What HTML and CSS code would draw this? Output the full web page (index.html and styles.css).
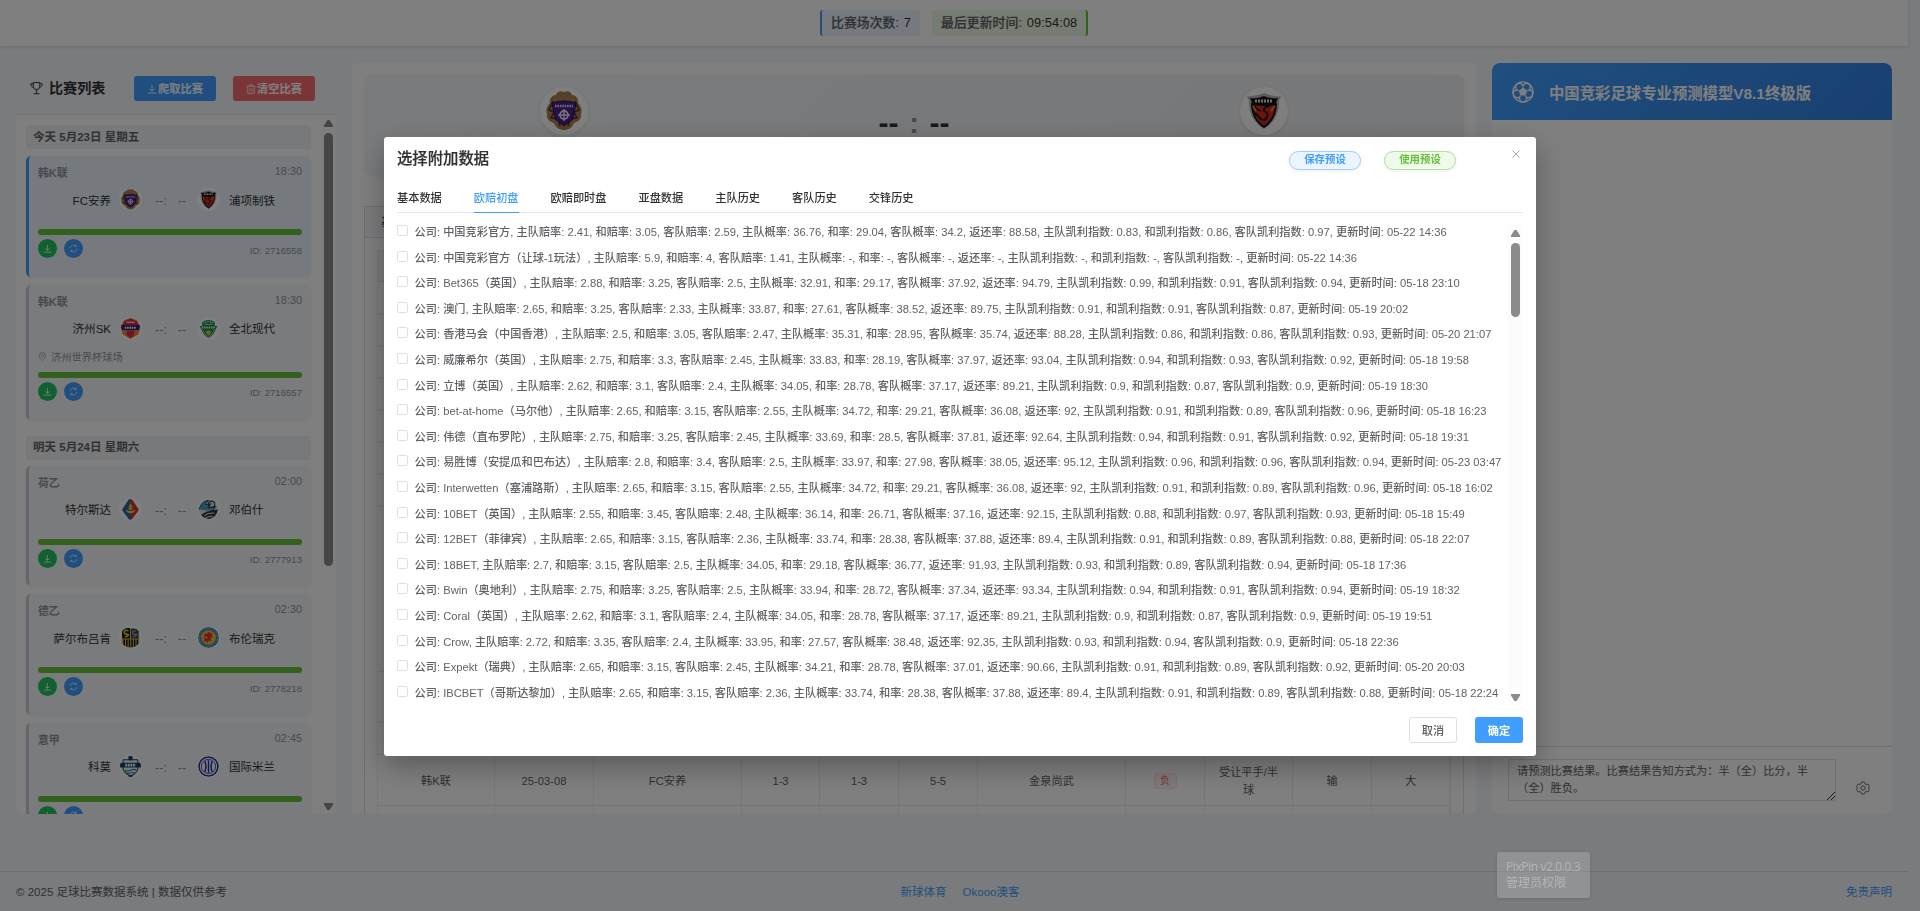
FILE: index.html
```html
<!DOCTYPE html>
<html lang="zh-CN">
<head>
<meta charset="utf-8">
<title>足球比赛数据系统</title>
<link rel="stylesheet" href="styles.css">
</head>
<body>
<svg class="defs" width="0" height="0">
  <symbol id="i-down" viewBox="0 0 20 20"><path d="M10 2v12M5 9.500l5 5 5-5M1.500 18h17" fill="none" stroke="currentColor" stroke-width="1.800"/></symbol>
  <symbol id="i-refresh" viewBox="0 0 20 20"><path d="M17.500 11A7.600 7.600 0 0 1 4.500 15.300M2.500 9A7.600 7.600 0 0 1 15.500 4.700M16 1.500v4h-4M4 18.500v-4h4" fill="none" stroke="currentColor" stroke-width="1.500"/></symbol>
  <symbol id="i-trash" viewBox="0 0 20 20"><path d="M1 4.500h18M7 4.500V1.500h6v3M3.500 4.500v14h13v-14M8 8.500v6M12 8.500v6" fill="none" stroke="currentColor" stroke-width="1.600"/></symbol>
  <symbol id="i-cup" viewBox="0 0 20 20"><path d="M5 1.500h10v6a5 5 0 0 1-10 0zM5 3.500H1.200c0 3 1 5 4 5.500M15 3.500h3.800c0 3-1 5-4 5.500M10 12.500v6M5.500 18.800h9" fill="none" stroke="currentColor" stroke-width="1.500"/></symbol>
  <symbol id="i-pin" viewBox="0 0 20 20"><path d="M10 19C5.500 15 3 11.500 3 8a7 7 0 0 1 14 0c0 3.500-2.500 7-7 11z" fill="none" stroke="currentColor" stroke-width="1.500"/><circle cx="10" cy="8" r="2.800" fill="none" stroke="currentColor" stroke-width="1.500"/></symbol>
  <symbol id="i-gear" viewBox="0 0 20 20"><path d="M7.800 1.500h4.400l.7 2.500 1.700 1 2.500-.7 2.200 3.800-1.800 1.900 1.800 1.900-2.200 3.800-2.500-.7-1.700 1-.7 2.500H7.800L7.100 16l-1.700-1-2.500.7-2.200-3.800L2.500 10 .7 8.100l2.200-3.800 2.500.7 1.700-1z" fill="none" stroke="currentColor" stroke-width="1.300"/><circle cx="10" cy="10" r="3" fill="none" stroke="currentColor" stroke-width="1.300"/></symbol>
  <symbol id="c-anyang" viewBox="0 0 40 40"><path d="M20 1c4-2 7 0 8 3 4 0 7 4 6 8 4 4 4 8 3 11 1 5-3 8-7 9-2 5-6 7-10 7s-8-2-10-7c-4-1-8-4-7-9-1-3-1-7 3-11-1-4 2-8 6-8 1-3 4-5 8-3z" fill="#a9824e"/><path d="M9 10l-4 9 5 2-3 6 7 1 2 7M31 10l4 9-5 2 3 6-7 1-2 7" stroke="#4b3020" fill="none" stroke-width="1.400"/><path d="M8 12q12-4 24 0l-3 16-9 7-9-7z" fill="#4b1f8c" stroke="#2a1250"/><path d="M11 15h18" stroke="#d9cfee" stroke-width="2.400" stroke-dasharray="1.600 .8"/><circle cx="20" cy="24" r="4" fill="none" stroke="#e9e3f5" stroke-width="1.800"/><path d="M20 18v12M14 24h12" stroke="#e9e3f5" stroke-width="1.400"/></symbol>
  <symbol id="c-pohang" viewBox="0 0 40 40"><path d="M3 5q8 1 17-3 9 4 17 3l-2 5q1 18-15 28Q4 28 5 10z" fill="#b9babd"/><path d="M8 10h24q0 16-12 25Q8 26 8 10z" fill="#d3281c"/><path d="M6 7q7 1 14-2 7 3 14 2l-3 7q-11 2-22 0z" fill="#151515"/><path d="M8 12q0 16 12 24 12-8 12-24" fill="none" stroke="#151515" stroke-width="2"/><path d="M10 15q3 4 7 5M26 15q-7 1-6 5 5 2 3 6-1 3-4 3M11 22l7 7" fill="none" stroke="#151515" stroke-width="1.800"/><path d="M9 15l3 5M31 15l-4 5" stroke="#d89a2a" stroke-width="1.600"/><path d="M11 10h18" stroke="#ddd" stroke-width="2.800" stroke-dasharray="2 1"/></symbol>
  <symbol id="c-jeju" viewBox="0 0 40 40"><path d="M20 0l12 4 7 13-4 14-15 9L5 31 1 17 8 4z" fill="#e8834a"/><path d="M20 1l11 5 6 9H3l6-9z" fill="#dc2740"/><path d="M2 14h36l-2 9H4z" fill="#22266b"/><path d="M12 8h16" stroke="#fff" stroke-width="2"/><path d="M9 18.500h22" stroke="#fff" stroke-width="4" stroke-dasharray="3 1.400"/><path d="M13 24h14v9l-7 5-7-5z" fill="#dc2740"/></symbol>
  <symbol id="c-jeonbuk" viewBox="0 0 40 40"><path d="M8 8q12-8 24 0v7h5l-4 8q-2 9-13 15Q9 32 7 23l-4-8h5z" fill="#1d8a4e"/><path d="M11 9q9-5 18 0M12 12h16" fill="none" stroke="#cfe8da" stroke-width="1.600"/><path d="M7 18h26" stroke="#e6f2ea" stroke-width="4" stroke-dasharray="3 1.400"/><path d="M9 22q2 9 11 14 9-5 11-14" fill="none" stroke="#e6f2ea" stroke-width="1.200"/><path d="M14 26l6-3 6 3-6 8z" fill="#d8c93c"/></symbol>
  <symbol id="c-telstar" viewBox="0 0 40 40"><path d="M20 0q3 0 5 4l10 15q1 3-2 6L23 38q-3 3-6 0L7 25q-3-3-2-6L15 4q2-4 5-4z" fill="#d0392f"/><path d="M20 0v40q-2 0-3-2L7 25q-3-3-2-6L15 4q2-4 5-4z" fill="#1f6ba8"/><path d="M20 8q5 6 3 13h-6q-2-7 3-13z" fill="#e3bd3a"/><path d="M11 20q9 6 18 0-1 7-9 7t-9-7z" fill="#f0cf55"/></symbol>
  <symbol id="c-bosch" viewBox="0 0 40 40"><circle cx="20" cy="20" r="18" fill="#dfe3e6"/><path d="M2 20q4-15 18-18l-6 9 11-2-6 8 15-3-6 9" fill="#4a9cc8" stroke="#333" stroke-width="1.500"/><path d="M6 30q12-8 32-10-3 15-17 18-10-1-15-8z" fill="#2d3338"/><path d="M12 32q8-7 19-5M14 36q8-4 14-3" stroke="#e8e8e8" stroke-width="2" fill="none"/><circle cx="26" cy="10" r="6" fill="none" stroke="#333" stroke-width="2"/></symbol>
  <symbol id="c-saar" viewBox="0 0 40 40"><path d="M4 7q3-6 15-5l1 2 1-2q12-1 15 5l1 23q-7 10-17 10T3 30z" fill="#cdb92a"/><path d="M4 7q3-6 15-5v20H4z" fill="#1b1b20"/><path d="M21 4q11-2 14 4v14H21z" fill="#3a3f66"/><path d="M8 24v11M13 24v13M18 24v14M23 24v14M28 24v13M33 24v10" stroke="#1b1b3a" stroke-width="3"/><path d="M16 7q-8-2-8 2.500t6 4.500-4 5" fill="none" stroke="#e3cf31" stroke-width="2.800"/><path d="M31 8q-7-2-7 2.500t6 3.500-5 5" fill="none" stroke="#8e93b8" stroke-width="2.600"/></symbol>
  <symbol id="c-braun" viewBox="0 0 40 40"><circle cx="20" cy="20" r="20" fill="#3d7fb5"/><circle cx="20" cy="20" r="17" fill="none" stroke="#cfe0ec" stroke-width="1.400" stroke-dasharray="2 1.500"/><circle cx="20" cy="20" r="14" fill="#e9c33a"/><path d="M12 10l5 4 2-4h5l-1 4 6-3-3 6 3 3-6 1 4 7-6-3-3 6-2-5-6 3 3-7-4-1 5-3-4-3 4-1z" fill="#e0352e"/><circle cx="16" cy="20" r="1.500" fill="#fff"/></symbol>
  <symbol id="c-como" viewBox="0 0 40 40"><path d="M6 7h28v18q-2 8-14 13Q8 33 6 25z" fill="#eef3f5" stroke="#1d4a6b" stroke-width="2"/><path d="M16 0h8v8h-8z M0 13h40v9H0z" fill="#173f60"/><path d="M16 36h8v4h-8z" fill="#173f60"/><path d="M10 17.500h20" stroke="#fff" stroke-width="5" stroke-dasharray="3.500 1.400"/><path d="M9 27q5 3 11 0t11 0M13 32q4 2 7 0t7 0" fill="none" stroke="#2f7f96" stroke-width="2"/></symbol>
  <symbol id="c-inter" viewBox="0 0 40 40"><circle cx="20" cy="20" r="18" fill="#fff" stroke="#1b2c9c" stroke-width="3"/><circle cx="20" cy="20" r="13.500" fill="none" stroke="#1b2c9c" stroke-width="1.600"/><path d="M13 10q4 10 0 20M20 8v24M27 10q-4 10 0 20" fill="none" stroke="#1b2c9c" stroke-width="2.800"/></symbol>
</svg>

<div class="page">
  <header class="topbar">
    <div class="stat stat-blue">比赛场次数: <b>7</b></div>
    <div class="stat stat-green">最后更新时间: <b>09:54:08</b></div>
  </header>

  <main class="columns">
    <section class="matches">
      <div class="matches-head">
        <h2><svg class="cup"><use href="#i-cup"/></svg>比赛列表</h2>
        <button class="btn blue"><svg><use href="#i-down"/></svg>爬取比赛</button>
        <button class="btn red"><svg><use href="#i-trash"/></svg>清空比赛</button>
      </div>
      <div class="matches-body">
        <div class="match-list">
          <h3 class="day">今天 5月23日 星期五</h3>
          <article class="match active">
            <div class="meta"><span class="league">韩K联</span><span class="time">18:30</span></div>
            <div class="teams"><span class="home">FC安养</span><svg class="crest"><use href="#c-anyang"/></svg><span class="score">--:&nbsp;&nbsp; --</span><svg class="crest"><use href="#c-pohang"/></svg><span class="away">浦项制铁</span></div>
            <div class="bar"></div>
            <div class="actions"><i class="dot green"><svg><use href="#i-down"/></svg></i><i class="dot blue"><svg><use href="#i-refresh"/></svg></i><span class="mid">ID: 2716558</span></div>
          </article>
          <article class="match venue-on">
            <div class="meta"><span class="league">韩K联</span><span class="time">18:30</span></div>
            <div class="teams"><span class="home">济州SK</span><svg class="crest"><use href="#c-jeju"/></svg><span class="score">--:&nbsp;&nbsp; --</span><svg class="crest"><use href="#c-jeonbuk"/></svg><span class="away">全北现代</span></div>
            <div class="venue"><svg><use href="#i-pin"/></svg>济州世界杯球场</div>
            <div class="bar"></div>
            <div class="actions"><i class="dot green"><svg><use href="#i-down"/></svg></i><i class="dot blue"><svg><use href="#i-refresh"/></svg></i><span class="mid">ID: 2716557</span></div>
          </article>
          <h3 class="day next">明天 5月24日 星期六</h3>
          <article class="match">
            <div class="meta"><span class="league">荷乙</span><span class="time">02:00</span></div>
            <div class="teams"><span class="home">特尔斯达</span><svg class="crest"><use href="#c-telstar"/></svg><span class="score">--:&nbsp;&nbsp; --</span><svg class="crest"><use href="#c-bosch"/></svg><span class="away">邓伯什</span></div>
            <div class="bar"></div>
            <div class="actions"><i class="dot green"><svg><use href="#i-down"/></svg></i><i class="dot blue"><svg><use href="#i-refresh"/></svg></i><span class="mid">ID: 2777913</span></div>
          </article>
          <article class="match">
            <div class="meta"><span class="league">德乙</span><span class="time">02:30</span></div>
            <div class="teams"><span class="home">萨尔布吕肯</span><svg class="crest"><use href="#c-saar"/></svg><span class="score">--:&nbsp;&nbsp; --</span><svg class="crest"><use href="#c-braun"/></svg><span class="away">布伦瑞克</span></div>
            <div class="bar"></div>
            <div class="actions"><i class="dot green"><svg><use href="#i-down"/></svg></i><i class="dot blue"><svg><use href="#i-refresh"/></svg></i><span class="mid">ID: 2778218</span></div>
          </article>
          <article class="match">
            <div class="meta"><span class="league">意甲</span><span class="time">02:45</span></div>
            <div class="teams"><span class="home">科莫</span><svg class="crest"><use href="#c-como"/></svg><span class="score">--:&nbsp;&nbsp; --</span><svg class="crest"><use href="#c-inter"/></svg><span class="away">国际米兰</span></div>
            <div class="bar"></div>
            <div class="actions"><i class="dot green"><svg><use href="#i-down"/></svg></i><i class="dot blue"><svg><use href="#i-refresh"/></svg></i></div>
          </article>
        </div>
        <div class="scroll"><i class="up"></i><i class="thumb"></i><i class="down"></i></div>
      </div>
    </section>

    <section class="detail">
      <div class="versus">
        <div class="side"><span class="logo"><svg><use href="#c-anyang"/></svg></span></div>
        <div class="big-score"><span>--</span><em>:</em><span>--</span></div>
        <div class="side"><span class="logo"><svg><use href="#c-pohang"/></svg></span></div>
      </div>
      <div class="tabbox">
        <div class="tabbox-head">基本数据</div>
        <div class="grid">
          <div class="gr head"></div><div class="gr r33"></div><div class="gr"></div><div class="gr"></div><div class="gr"></div><div class="gr"></div><div class="gr"></div><div class="gr"></div><div class="gr fill"></div><div class="gr r51"></div><div class="gr"></div>
          <div class="gr cells">
            <span>韩K联</span><span>25-03-08</span><span>FC安养</span><span>1-3</span><span>1-3</span><span>5-5</span><span>金泉尚武</span><span><i class="tag">负</i></span><span>受让平手/半<br>球</span><span>输</span><span>大</span>
          </div>
          <div class="gr cells last"><span></span><span></span><span></span><span></span><span></span><span></span><span></span><span></span><span></span><span></span><span></span></div>
        </div>
      </div>
    </section>

    <section class="ai">
      <div class="ai-head">
        <svg viewBox="0 0 24 24"><circle cx="12" cy="12" r="11" fill="none" stroke="#fff" stroke-width="1.500"/><path d="M12 7.200l4.600 3.300-1.800 5.400H9.200l-1.800-5.400z" fill="#fff"/><path d="M12 7.200V4.500M16.600 10.500l3-1M14.800 15.900l1.700 2.400M9.200 15.900l-1.700 2.400M7.400 10.500l-3-1" stroke="#fff" stroke-width="1.500"/><path d="M8 1.800l4 2.700 4-2.700 4 3-.4 4.700 3.200 3-1.300 5-5 .8-2 4.200h-5l-2-4.200-5-.8-1.300-5 3.200-3L4 4.800z" fill="none" stroke="#fff" stroke-width="1.500"/></svg>
        <span>中国竞彩足球专业预测模型V8.1终极版</span>
      </div>
      <div class="ai-body"></div>
      <div class="ai-input">
        <div class="area">请预测比赛结果。比赛结果告知方式为：半（全）比分，半<br>（全）胜负。<svg viewBox="0 0 8 8"><path d="M0 8l8-8M4 8l4-4" stroke="#333" stroke-width="1"/></svg></div>
        <svg class="gear"><use href="#i-gear"/></svg>
      </div>
    </section>
  </main>

  <footer class="foot">
    <span>© 2025 足球比赛数据系统 | 数据仅供参考</span>
    <span class="links"><a>新球体育</a><a>Okooo澳客</a></span>
    <a class="right">免责声明</a>
  </footer>
</div>

<div class="overlay">
  <div class="dialog">
    <div class="dlg-head">
      <h1>选择附加数据</h1>
      <div class="presets"><span class="pill pb">保存预设</span><span class="pill pg">使用预设</span></div>
      <svg class="close" viewBox="0 0 10 10"><path d="M.5.5l9 9M9.500.5l-9 9" stroke="#909399" stroke-width="1"/></svg>
    </div>
    <nav class="tabs"><span>基本数据</span><span class="on">欧赔初盘</span><span>欧赔即时盘</span><span>亚盘数据</span><span>主队历史</span><span>客队历史</span><span>交锋历史</span></nav>
    <div class="dlg-body">
      <div class="rows">
        <label><i></i>公司: 中国竞彩官方, 主队赔率: 2.41, 和赔率: 3.05, 客队赔率: 2.59, 主队概率: 36.76, 和率: 29.04, 客队概率: 34.2, 返还率: 88.58, 主队凯利指数: 0.83, 和凯利指数: 0.86, 客队凯利指数: 0.97, 更新时间: 05-22 14:36</label>
        <label><i></i>公司: 中国竞彩官方（让球-1玩法）, 主队赔率: 5.9, 和赔率: 4, 客队赔率: 1.41, 主队概率: -, 和率: -, 客队概率: -, 返还率: -, 主队凯利指数: -, 和凯利指数: -, 客队凯利指数: -, 更新时间: 05-22 14:36</label>
        <label><i></i>公司: Bet365（英国）, 主队赔率: 2.88, 和赔率: 3.25, 客队赔率: 2.5, 主队概率: 32.91, 和率: 29.17, 客队概率: 37.92, 返还率: 94.79, 主队凯利指数: 0.99, 和凯利指数: 0.91, 客队凯利指数: 0.94, 更新时间: 05-18 23:10</label>
        <label><i></i>公司: 澳门, 主队赔率: 2.65, 和赔率: 3.25, 客队赔率: 2.33, 主队概率: 33.87, 和率: 27.61, 客队概率: 38.52, 返还率: 89.75, 主队凯利指数: 0.91, 和凯利指数: 0.91, 客队凯利指数: 0.87, 更新时间: 05-19 20:02</label>
        <label><i></i>公司: 香港马会（中国香港）, 主队赔率: 2.5, 和赔率: 3.05, 客队赔率: 2.47, 主队概率: 35.31, 和率: 28.95, 客队概率: 35.74, 返还率: 88.28, 主队凯利指数: 0.86, 和凯利指数: 0.86, 客队凯利指数: 0.93, 更新时间: 05-20 21:07</label>
        <label><i></i>公司: 威廉希尔（英国）, 主队赔率: 2.75, 和赔率: 3.3, 客队赔率: 2.45, 主队概率: 33.83, 和率: 28.19, 客队概率: 37.97, 返还率: 93.04, 主队凯利指数: 0.94, 和凯利指数: 0.93, 客队凯利指数: 0.92, 更新时间: 05-18 19:58</label>
        <label><i></i>公司: 立博（英国）, 主队赔率: 2.62, 和赔率: 3.1, 客队赔率: 2.4, 主队概率: 34.05, 和率: 28.78, 客队概率: 37.17, 返还率: 89.21, 主队凯利指数: 0.9, 和凯利指数: 0.87, 客队凯利指数: 0.9, 更新时间: 05-19 18:30</label>
        <label><i></i>公司: bet-at-home（马尔他）, 主队赔率: 2.65, 和赔率: 3.15, 客队赔率: 2.55, 主队概率: 34.72, 和率: 29.21, 客队概率: 36.08, 返还率: 92, 主队凯利指数: 0.91, 和凯利指数: 0.89, 客队凯利指数: 0.96, 更新时间: 05-18 16:23</label>
        <label><i></i>公司: 伟德（直布罗陀）, 主队赔率: 2.75, 和赔率: 3.25, 客队赔率: 2.45, 主队概率: 33.69, 和率: 28.5, 客队概率: 37.81, 返还率: 92.64, 主队凯利指数: 0.94, 和凯利指数: 0.91, 客队凯利指数: 0.92, 更新时间: 05-18 19:31</label>
        <label><i></i>公司: 易胜博（安提瓜和巴布达）, 主队赔率: 2.8, 和赔率: 3.4, 客队赔率: 2.5, 主队概率: 33.97, 和率: 27.98, 客队概率: 38.05, 返还率: 95.12, 主队凯利指数: 0.96, 和凯利指数: 0.96, 客队凯利指数: 0.94, 更新时间: 05-23 03:47</label>
        <label><i></i>公司: Interwetten（塞浦路斯）, 主队赔率: 2.65, 和赔率: 3.15, 客队赔率: 2.55, 主队概率: 34.72, 和率: 29.21, 客队概率: 36.08, 返还率: 92, 主队凯利指数: 0.91, 和凯利指数: 0.89, 客队凯利指数: 0.96, 更新时间: 05-18 16:02</label>
        <label><i></i>公司: 10BET（英国）, 主队赔率: 2.55, 和赔率: 3.45, 客队赔率: 2.48, 主队概率: 36.14, 和率: 26.71, 客队概率: 37.16, 返还率: 92.15, 主队凯利指数: 0.88, 和凯利指数: 0.97, 客队凯利指数: 0.93, 更新时间: 05-18 15:49</label>
        <label><i></i>公司: 12BET（菲律宾）, 主队赔率: 2.65, 和赔率: 3.15, 客队赔率: 2.36, 主队概率: 33.74, 和率: 28.38, 客队概率: 37.88, 返还率: 89.4, 主队凯利指数: 0.91, 和凯利指数: 0.89, 客队凯利指数: 0.88, 更新时间: 05-18 22:07</label>
        <label><i></i>公司: 18BET, 主队赔率: 2.7, 和赔率: 3.15, 客队赔率: 2.5, 主队概率: 34.05, 和率: 29.18, 客队概率: 36.77, 返还率: 91.93, 主队凯利指数: 0.93, 和凯利指数: 0.89, 客队凯利指数: 0.94, 更新时间: 05-18 17:36</label>
        <label><i></i>公司: Bwin（奥地利）, 主队赔率: 2.75, 和赔率: 3.25, 客队赔率: 2.5, 主队概率: 33.94, 和率: 28.72, 客队概率: 37.34, 返还率: 93.34, 主队凯利指数: 0.94, 和凯利指数: 0.91, 客队凯利指数: 0.94, 更新时间: 05-19 18:32</label>
        <label><i></i>公司: Coral（英国）, 主队赔率: 2.62, 和赔率: 3.1, 客队赔率: 2.4, 主队概率: 34.05, 和率: 28.78, 客队概率: 37.17, 返还率: 89.21, 主队凯利指数: 0.9, 和凯利指数: 0.87, 客队凯利指数: 0.9, 更新时间: 05-19 19:51</label>
        <label><i></i>公司: Crow, 主队赔率: 2.72, 和赔率: 3.35, 客队赔率: 2.4, 主队概率: 33.95, 和率: 27.57, 客队概率: 38.48, 返还率: 92.35, 主队凯利指数: 0.93, 和凯利指数: 0.94, 客队凯利指数: 0.9, 更新时间: 05-18 22:36</label>
        <label><i></i>公司: Expekt（瑞典）, 主队赔率: 2.65, 和赔率: 3.15, 客队赔率: 2.45, 主队概率: 34.21, 和率: 28.78, 客队概率: 37.01, 返还率: 90.66, 主队凯利指数: 0.91, 和凯利指数: 0.89, 客队凯利指数: 0.92, 更新时间: 05-20 20:03</label>
        <label><i></i>公司: IBCBET（哥斯达黎加）, 主队赔率: 2.65, 和赔率: 3.15, 客队赔率: 2.36, 主队概率: 33.74, 和率: 28.38, 客队概率: 37.88, 返还率: 89.4, 主队凯利指数: 0.91, 和凯利指数: 0.89, 客队凯利指数: 0.88, 更新时间: 05-18 22:24</label>
      </div>
      <div class="scroll dlg-scroll"><i class="up"></i><i class="thumb"></i><i class="down"></i></div>
    </div>
    <div class="dlg-foot"><button class="cancel">取消</button><button class="ok">确定</button></div>
  </div>
  <div class="pixpin"><span>PixPin v2.0.0.3</span><br>管理员权限</div>
</div>
</body>
</html>
```
FILE: styles.css
```css
* { box-sizing: border-box; margin: 0; padding: 0; }
html, body { height: 911px; overflow: hidden; }
body { font-family: "Liberation Sans", "Noto Sans CJK SC", sans-serif; font-size: 12.8px; color: #303133; background: #f5f7fa; }
i, em { font-style: normal; }
svg { display: block; flex: none; }
.defs { position: absolute; }

.page { width: 1908px; height: 911px; display: flex; flex-direction: column; }
.topbar { height: 46px; flex: none; background: #fff; box-shadow: 0 1px 5px rgba(0,0,0,.12); display: flex; justify-content: center; align-items: center; gap: 12px; }
.stat { height: 26px; line-height: 25px; padding: 0 9px; border-radius: 3px; font-weight: 500; color: #606266; white-space: nowrap; letter-spacing: .1px; -webkit-text-stroke: .2px; }
.stat b { font-weight: 400; color: #303133; margin-left: 1px; -webkit-text-stroke: 0; }
.stat-blue { width: 100px; background: #ecf5ff; border-left: 2.500px solid #409eff; }
.stat-green { width: 156px; padding-right: 0; background: #eef8e6; border-right: 2.500px solid #67c23a; }

.columns { display: flex; gap: 16px; height: 751px; margin-top: 17px; padding: 0 16px; flex: none; }
.matches { width: 320px; display: flex; flex-direction: column; border-radius: 6px; overflow: hidden; background: #fff; }
.matches-head { height: 52px; flex: none; background: #f5f7fa; border-bottom: 1px solid #e4e7ed; display: flex; align-items: center; padding: 0 21px 0 14px; }
.matches-head h2 { font-size: 14.08px; font-weight: 700; display: flex; align-items: center; gap: 6px; width: 104px; line-height: 19px; }
.cup { width: 13px; height: 14px; margin-top: -1px; }
.btn { width: 82px; height: 25px; border: 0; border-radius: 3px; color: #fff; font: 700 11.200px "Liberation Sans", "Noto Sans CJK SC", sans-serif; display: flex; align-items: center; justify-content: center; gap: 1px; padding-bottom: 1px; }
.btn svg { width: 10px; height: 10px; margin-top: 1px; }
.btn.blue { background: #409eff; }
.btn.red { background: #f56c6c; margin-left: 17px; }
.matches-body { flex: 1; min-height: 0; display: flex; }
.match-list { width: 305px; padding: 10px 10px 0; overflow: hidden; }
.day { height: 24px; line-height: 24px; font-size: 11.520px; font-weight: 700; padding-left: 7px; background: #f0f2f5; border-radius: 3px; color: #606266; margin-bottom: 7px; }
.day.next { margin-top: 16px; margin-bottom: 6px; line-height: 23px; }
.match { height: 120.500px; margin-bottom: 8px; padding: 9px 9px 0; border-left: 3px solid #c8ccd8; border-radius: 5px; background: #f5f7fa; box-shadow: 0 1px 4px rgba(0,0,0,.06); }
.match.venue-on { height: 135px; }
.match.active { border-left-color: #409eff; background: #ecf5ff; }
.meta { display: flex; justify-content: space-between; height: 16px; font-size: 10.880px; line-height: 13px; color: #909399; }
.league { font-weight: 700; line-height: 17px; }
.teams { height: 40px; padding-bottom: 3px; display: grid; grid-template-columns: 73px 21px 57px 21px 1fr; align-items: center; font-size: 11.520px; white-space: nowrap; }
.home { text-align: right; }
.teams .home { width: max-content; justify-self: end; }
.crest { width: 23px; height: 23px; margin-left: 8px; padding: 1px; border-radius: 50%; background: #fff; }
.teams .away { margin-left: 19px; }
.score { padding-left: 23px; padding-top: 2px; color: #909399; font-size: 12.800px; }
.venue { height: 14px; display: flex; align-items: center; gap: 4px; font-size: 10.240px; color: #909399; }
.venue svg { width: 9px; height: 9px; }
.bar { height: 6px; margin-top: 8px; border-radius: 3px; background: #67c23a; }
.actions { display: flex; gap: 7px; margin-top: 4px; height: 19px; align-items: center; }
.dot { width: 19px; height: 19px; border-radius: 50%; color: #fff; display: flex; align-items: center; justify-content: center; }
.dot svg { width: 9px; height: 9px; }
.dot.green { background: #20c25f; }
.dot.blue { background: #409eff; }
.mid { margin-left: auto; font-size: 9.600px; color: #909399; padding-top: 3px; }

.scroll { width: 15px; background: #fcfcfc; display: flex; flex-direction: column; align-items: center; padding: 5px 0 4px; }
.scroll .up, .scroll .down { width: 9px; height: 7px; background: #8b8b8b; clip-path: polygon(38% 0, 62% 0, 100% 80%, 100% 100%, 0 100%, 0 80%); }
.scroll .down { margin-top: auto; transform: scaleY(-1); }
.scroll .thumb { width: 9px; height: 433px; margin-top: 6px; border-radius: 5px; background: #8b8b8b; }

.detail { width: 1124px; background: #fff; border-radius: 6px 6px 0 0; padding: 12px 12px 0 12px; overflow: hidden; display: flex; flex-direction: column; }
.versus { height: 101px; flex: none; border-radius: 8px; background: linear-gradient(135deg, #f5f7fa, #eceff3); box-shadow: 0 0 5px rgba(0,0,0,.05); display: grid; grid-template-columns: 400px 1fr 400px; }
.side { display: flex; justify-content: center; padding-top: 12px; }
.logo { width: 48px; height: 48px; border-radius: 50%; background: #fff; box-shadow: 0 1px 4px rgba(0,0,0,.1); display: flex; align-items: center; justify-content: center; }
.logo svg { width: 40px; height: 40px; }
.big-score { display: flex; justify-content: center; gap: 10.500px; font-size: 30px; font-weight: 700; line-height: 96px; }
.big-score em { color: #909399; }
.tabbox { margin-top: 30px; flex: 1; min-height: 0; border: 1px solid #dcdfe6; border-bottom: 0; display: flex; flex-direction: column; }
.tabbox-head { height: 31px; line-height: 30px; flex: none; padding-left: 16px; font-size: 11.200px; background: #f5f7fa; border-bottom: 1px solid #dcdfe6; }
.grid { margin: 12px 12px 0; flex: 1; min-height: 0; border: 1px solid #ebeef5; border-bottom: 0; display: flex; flex-direction: column; }
.gr { height: 32px; flex: none; border-bottom: 1px solid #e4e7ed; }
.gr.head { background: #f5f7fa; height: 31px; }
.gr.r33 { height: 33px; }
.gr.r51 { height: 51px; }
.gr.fill { flex: 1; }
.gr.cells { height: 51px; display: grid; grid-template-columns: 117px 99px 148px 78px 79px 79px 148px 79px 88px 79px 1fr; font-size: 11.200px; color: #606266; text-align: center; }
.gr.cells span { display: flex; align-items: center; justify-content: center; border-right: 1px solid #ebeef5; line-height: 18.500px; padding-top: 2px; }
.gr.cells.last { height: 8px; border: 0; }
.tag { width: 23px; height: 16px; line-height: 14px; font-size: 9.800px; border: 1px solid #fde2e2; border-radius: 3px; color: #f56c6c; background: #fef0f0; }

.ai { width: 400px; background: #fff; border-radius: 8px; overflow: hidden; display: flex; flex-direction: column; }
.ai-head { height: 57px; flex: none; background: linear-gradient(135deg, #409eff, #3080e0); display: flex; align-items: center; gap: 15px; padding-left: 20px; color: #fff; font-size: 15.360px; font-weight: 700; white-space: nowrap; }
.ai-head svg { width: 22px; height: 22px; }
.ai-body { flex: 1; background: radial-gradient(#fbfcfd 1px, transparent 1px) 0 0 / 4px 4px; }
.ai-input { height: 68px; flex: none; border-top: 1px solid #dcdfe6; padding: 12px 0 0 16px; display: flex; }
.area { position: relative; width: 328px; height: 42px; border: 1px solid #dcdfe6; border-radius: 2px; padding: 3px 8px; font-size: 11.200px; line-height: 17px; color: #606266; white-space: nowrap; }
.area svg { position: absolute; right: 0; bottom: 0; width: 8px; height: 8px; }
.gear { width: 14px; height: 14px; margin: 22px 0 0 20px; color: #606266; }

.foot { height: 40px; margin-top: auto; flex: none; border-top: 1px solid #dcdfe6; padding: 0 16px 2px; display: grid; grid-template-columns: 1fr auto 1fr; align-items: center; font-size: 11.520px; color: #606266; }
.foot a { color: #409eff; }
.links { display: flex; gap: 16px; margin-left: 12px; }
.foot .right { text-align: right; }

.overlay { position: fixed; inset: 0; background: rgba(0,0,0,.5); }
.dialog { width: 1152px; height: 619px; margin: 137px 0 0 384px; background: #fff; border-radius: 3px; box-shadow: 0 10px 29px rgba(0,0,0,.3); padding: 0 13px; display: flex; flex-direction: column; }
.dlg-head { height: 49px; flex: none; display: flex; }
.dlg-head h1 { font-size: 15.360px; font-weight: 500; line-height: 44px; color: #303133; -webkit-text-stroke: .2px; }
.presets { display: flex; gap: 23px; margin: 14px 56px 0 auto; }
.pill { width: 72px; height: 19px; line-height: 16px; border: 1px solid; border-radius: 10px; font-size: 10.400px; font-weight: 700; text-align: center; box-shadow: 0 1px 4px rgba(0,0,0,.07); }
.pb { color: #409eff; background: #ecf5ff; border-color: #9fceff; }
.pg { color: #67c23a; background: #f0f9eb; border-color: #b3e19d; }
.close { width: 8px; height: 8px; margin: 13px 3px 0 0; }
.tabs { height: 27px; flex: none; border-bottom: 1.500px solid #e4e7ed; display: flex; gap: 32px; font-size: 11.200px; font-weight: 500; line-height: 24px; }
.tabs .on { color: #409eff; border-bottom: 1.500px solid #409eff; height: 27px; }
.dlg-body { height: 480px; margin-top: 12px; flex: none; display: flex; }
.rows { flex: 1; overflow: hidden; display: flex; flex-direction: column; gap: 12.800px; }
.rows label { height: 12.800px; flex: none; display: flex; gap: 6.600px; line-height: 14.400px; font-size: 11.200px; font-weight: 500; color: #606266; white-space: nowrap; }
.rows label i { width: 11px; height: 11px; flex: none; border: 1px solid #dcdfe6; border-radius: 1.500px; }
.dlg-scroll .thumb { height: 74px; margin-top: 6px; }
.dlg-foot { margin-top: 12px; display: flex; justify-content: flex-end; gap: 18px; }
.dlg-foot button { width: 48px; height: 26px; border-radius: 3px; padding-bottom: 1px; font: 500 11.200px "Liberation Sans", "Noto Sans CJK SC", sans-serif; }
.cancel { background: #fff; border: 1px solid #dcdfe6; color: #606266; }
.dlg-foot .ok { background: #409eff; border: 0; color: #fff; font-weight: 700; }
.pixpin { position: absolute; left: 1497px; top: 852px; width: 93px; height: 46px; padding: 7px 9px; border-radius: 3px; background: rgba(255,255,255,.17); color: #b4b5b7; font: 12px/16px "Open Sans", "Noto Sans CJK SC", sans-serif; white-space: nowrap; box-shadow: 0 1px 4px rgba(0,0,0,.12); }
.pixpin span { letter-spacing: -.4px; }
```
